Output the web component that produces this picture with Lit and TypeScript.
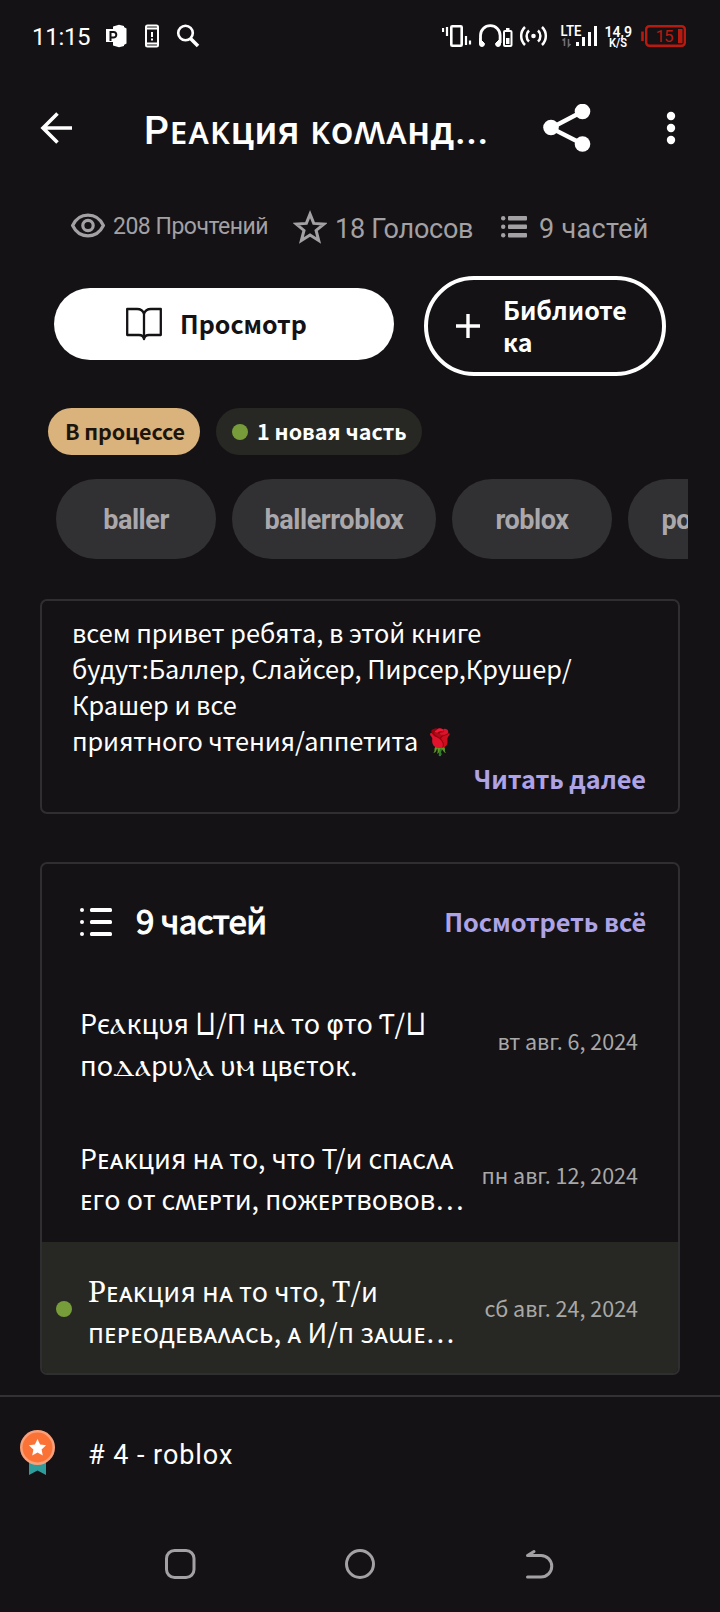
import { LitElement, html, css } from "lit";
import { customElement } from "lit/decorators.js";

interface Part {
  lines: unknown[];
  date: string;
  kind: string;
  fresh?: boolean;
}

const cop = (t: string) => html`<span class="cop">${t}</span>`;
const box = (t: string) => html`<span class="boxy">${t}</span>`;
const slab = (t: string) => html`<span class="slab">${t}</span>`;

const parts: Part[] = [
  {
    kind: "first",
    lines: [
      html`Рє${cop("ⲁ")}кцυя ${box("⊔")}/П н${cop("ⲁ")} ᴛо <span class="phi">φ</span>ᴛо Ƭ/${box("⊔")}`,
      html`по${cop("ⲇⲁ")}рυ${cop("ⲗⲁ")} υ${cop("ⲙ")} цвєᴛок.`,
    ],
    date: "вт авг. 6, 2024",
  },
  {
    kind: "second",
    lines: ["Рᴇᴀᴋция нᴀ ᴛо, чᴛо Т/и сᴨᴀсᴧᴀ", "ᴇᴦо оᴛ сʍᴇᴩᴛи, ᴨожᴇᴩᴛʙоʙоʙ…"],
    date: "пн авг. 12, 2024",
  },
  {
    kind: "third",
    fresh: true,
    lines: [
      html`${slab("Р")}ᴇᴀᴋция нᴀ ᴛо чᴛо, ${slab("Т")}/и`,
      "ᴨᴇᴩᴇодᴇʙᴀᴧᴀсь, ᴀ И/ᴨ зᴀɯᴇ…",
    ],
    date: "сб авг. 24, 2024",
  },
];

@customElement("app-root")
export class AppRoot extends LitElement {
  static styles = css`
    :host {
      display: flex;
      flex-direction: column;
      width: 720px;
      height: 1612px;
      overflow: hidden;
      background: #141215;
      color: #fff;
      font-family: "Noto Sans CJK SC", "Noto Sans", sans-serif;
      font-size: 25.3px;
    }
    * { box-sizing: border-box; }
    svg { display: block; flex: none; }
    .status { height: 72px; display: flex; align-items: center; padding: 0 33px 0 32px; font-family: Roboto, sans-serif; }
    .time { font-size: 24px; line-height: 28px; width: 74px; letter-spacing: -0.3px; padding-top: 2px; }
    .grow { flex: 1; }
    .bar { height: 112px; display: flex; align-items: center; padding: 0 41px 0 40px; }
    .bar h1 { margin: 5px 0 0 72px; width: 399px; font: 500 39px/48px Roboto, "Noto Sans", sans-serif; letter-spacing: 0.5px; white-space: nowrap; }
    .stats { height: 86px; margin-bottom: 6px; display: flex; align-items: center; padding-left: 71px; color: #a3a1a4; font: 27px/32px Roboto, sans-serif; white-space: nowrap; }
    .stats .reads { font-size: 23px; letter-spacing: -0.5px; width: 188px; padding-left: 8px; }
    .stats .votes { width: 174px; padding: 3px 0 0 8px; letter-spacing: -0.25px; }
    .stats .count { padding: 3px 0 0 12px; letter-spacing: 0.3px; }
    .actions { height: 100px; display: flex; align-items: center; padding-left: 54px; gap: 30px; font-weight: 700; font-size: 25px; }
    .read { width: 340px; height: 72px; margin-top: -4px; border-radius: 36px; background: #fff; color: #141215; display: flex; align-items: center; gap: 18px; padding-left: 72px; line-height: 36px; }
    .read span, .lib span { margin-top: -2px; }
    .lib { width: 242px; height: 100px; border: 4px solid #fff; border-radius: 50px; display: flex; align-items: center; gap: 23px; padding-left: 28px; line-height: 32px; }
    .badges { margin-top: 32px; height: 47px; display: flex; gap: 16px; padding-left: 48px; font-weight: 700; font-size: 21.5px; line-height: 45px; white-space: nowrap; }
    .state { width: 152px; border-radius: 24px; background: #d9b27c; color: #1c150c; padding-left: 17px; letter-spacing: -0.15px; }
    .fresh { width: 206px; border-radius: 24px; background: #272823; display: flex; gap: 9px; padding-left: 16px; }
    .fresh .dot { margin-top: 16px; }
    .dot { width: 16px; height: 16px; border-radius: 50%; background: #779d3a; flex: none; }
    .tags { margin: 24px 32px 0 56px; height: 80px; display: flex; gap: 16px; overflow: hidden; color: #aaa8ab; font: 700 27px/80px Roboto, sans-serif; letter-spacing: -0.45px; }
    .tag { flex: none; width: 160px; height: 80px; border-radius: 40px; background: #313033; text-align: center; padding-top: 1px; }
    .tag.wide { width: 204px; }
    .card { margin: 40px 40px 0; border: 2px solid #2f2e31; border-radius: 7px; overflow: hidden; }
    .about { height: 215px; padding: 13px 30px 0; line-height: 36px; white-space: nowrap; }
    .tight { letter-spacing: -0.12px; }
    .more { color: #ada3e6; font-weight: 700; letter-spacing: -0.08px; }
    .about .more { text-align: right; line-height: 40px; padding-right: 2px; }
    .toc { margin-top: 48px; height: 513px; }
    .head { height: 115px; display: flex; align-items: center; padding: 0 32px 0 38px; }
    .head h2 { margin: -3px auto 0 24px; font-size: 33px; font-weight: 400; line-height: 40px; letter-spacing: -0.6px; -webkit-text-stroke: 1.1px #fff; }
    .head .more { margin-top: -2px; }
    .part { display: flex; align-items: center; padding: 0 40px 0 38px; }
    .name { flex: 1; white-space: nowrap; }
    .date { font-size: 21.5px; color: #a9a8a8; line-height: 32px; white-space: nowrap; }
    .first { height: 121px; }
    .first .name { line-height: 42px; font-size: 27px; padding-top: 8px; }
    .first .date { padding-top: 3px; }
    .second { height: 142px; padding-top: 7px; }
    .second .name, .third .name { line-height: 40.5px; font-size: 26.8px; padding-top: 8px; }
    .second .name { letter-spacing: 0.03px; }
    .third { height: 131px; background: #272823; padding-left: 14px; }
    .third .dot { margin: 2px 16px 0 0; }
    .third .name { letter-spacing: 0.1px; }
    .cop { line-height: 0; font-size: 1.17em; }
    .boxy { display: inline-block; line-height: 20px; font-family: "DejaVu Sans", sans-serif; transform: scale(1, 1.32); transform-origin: 50% 78%; }
    .phi { line-height: 0; font-family: "DejaVu Sans", sans-serif; }
    .slab { line-height: 0; font-family: "Noto Serif", "DejaVu Serif", serif; font-size: 1.1em; }
    .rank { margin-top: 20px; border-top: 2px solid #323134; height: 120px; display: flex; align-items: center; padding: 0 20px 6px; gap: 33px; font: 27px/32px Roboto, sans-serif; letter-spacing: 0.95px; }
    .rank span { padding-top: 3px; }
    .nav { flex: 1; display: flex; align-items: center; padding: 0 0 0 164px; }
  `;

  private statusIcons() {
    return html`
      <svg width="94" height="24" viewBox="0 0 94 24" fill="none">
        <path d="M13 0.8 18 2v20l-5 1.200L7 21.500V18H0V5h7V2.500z" fill="#fff"/>
        <path d="M4.500 17V8h3a2.800 2.800 0 0 1 0 5.600H5" stroke="#141215" stroke-width="2"/>
        <path d="M17 2.500l3.500 2v15l-3.500 2z" fill="#fff"/>
        <rect x="40" y="1.500" width="12" height="21" rx="1.500" stroke="#fff" stroke-width="2"/>
        <path d="M40 4.500h12M40 19.500h12M46 8v5M46 14.500v2" stroke="#fff" stroke-width="2"/>
        <circle cx="79.500" cy="9" r="7.300" stroke="#fff" stroke-width="2.600"/>
        <path d="M84.500 14.500 92 22" stroke="#fff" stroke-width="3.600"/>
      </svg>`;
  }

  private systemIcons() {
    return html`
      <svg width="245" height="26" viewBox="443 23 245 26" fill="none" stroke="#fff">
        <rect x="452.300" y="26.300" width="10.400" height="19.500" rx="1" stroke-width="2.600"/>
        <path d="M444 28v4M448 27v9M467 36v9M471 40.500v4" stroke-width="2.200"/>
        <path d="M481.500 43v-7.500a9.800 9.800 0 0 1 19.600 0V43" stroke-width="2.800"/>
        <path d="M480.500 38.500v5.500q0 2.500 2.500 2.500t2.500-3zM501.500 38.500v5.500q0 2.500-2.500 2.500t-2.500-3z" fill="#fff" stroke-width="1"/>
        <rect x="505" y="31" width="7.500" height="15" rx="1" stroke-width="2"/>
        <path d="M507 29h3.500" stroke-width="2"/>
        <path d="M507 38h3.500v6H507z" fill="#fff" stroke="none"/>
        <circle cx="534.500" cy="36" r="2.300" fill="#fff" stroke="none"/>
        <path d="M530 30.500a7.500 7.500 0 0 0 0 11M539 30.500a7.500 7.500 0 0 1 0 11M526 27a12.500 12.500 0 0 0 0 18M543 27a12.500 12.500 0 0 1 0 18" stroke-width="2.500"/>
        <path d="M565.500 46v-7l-2 1.500M569.500 39v7l2-2" stroke="#6e6d70" stroke-width="1.600"/>
        <path d="M578.500 42v4M584.500 37v9M590.500 32v14M596.500 26v20" stroke-width="3"/>
        <g fill="#fff" stroke="none" font-family="Roboto, sans-serif" font-weight="600">
          <text x="561.500" y="36" font-size="15" textLength="21" lengthAdjust="spacingAndGlyphs">LTE</text>
          <text x="605.500" y="37" font-size="15.500" textLength="27.500" lengthAdjust="spacingAndGlyphs">14,9</text>
          <text x="610" y="47" font-size="12" textLength="18" lengthAdjust="spacingAndGlyphs">K/S</text>
        </g>
        <rect x="647.200" y="26.200" width="38.600" height="19.600" rx="3" stroke="#b81a10" stroke-width="2.400"/>
        <path d="M643.500 31.500v9.500" stroke="#b81a10" stroke-width="2.600"/>
        <rect x="679" y="29" width="4.500" height="14" fill="#b81a10" stroke="none"/>
        <text x="656.500" y="42" font-size="17" font-family="Roboto, sans-serif" textLength="18" fill="#b81a10" stroke="none">15</text>
      </svg>`;
  }

  render() {
    return html`
      <div class="status">
        <div class="time">11:15</div>${this.statusIcons()}
        <div class="grow"></div>${this.systemIcons()}
      </div>

      <div class="bar">
        <svg width="32" height="32" viewBox="0 0 32 32" fill="none" stroke="#fff" stroke-width="3.600">
          <path d="M32 16H3M17.500 1.500 3 16l14.500 14.500"/>
        </svg>
        <h1>Рᴇᴀᴋция ᴋоʍᴀнд...</h1>
        <svg width="48" height="48" viewBox="0 0 48 48" fill="#fff">
          <path d="M39.500 7.500 8 24l31.500 16" fill="none" stroke="#fff" stroke-width="4.300"/>
          <circle cx="39.500" cy="7.500" r="7.800"/><circle cx="8" cy="23.500" r="7.800"/><circle cx="39.500" cy="40" r="7.800"/>
        </svg>
        <div class="grow"></div>
        <svg width="16" height="34" viewBox="0 0 16 34" fill="#fff">
          <circle cx="8" cy="5" r="4.200"/><circle cx="8" cy="17" r="4.200"/><circle cx="8" cy="29" r="4.200"/>
        </svg>
      </div>

      <div class="stats">
        <svg width="34" height="28" viewBox="0 0 34 28" fill="none" stroke="#a3a1a4" stroke-width="3.200">
          <path d="M1.600 12.500C5 5.500 10.500 2.200 17 2.200s12 3.300 15.400 10.300C29 19.500 23.500 22.800 17 22.800S5 19.500 1.600 12.500z"/>
          <circle cx="17" cy="12.500" r="5.200"/>
        </svg>
        <span class="reads">208 Прочтений</span>
        <svg width="34" height="34" viewBox="0 0 34 34" fill="none" stroke="#a3a1a4" stroke-width="2.700">
          <path d="M17 5 20.300 13.300 29.300 13.900 22.400 19.600 24.700 28.500 17 23.600 9.300 28.500 11.600 19.600 4.700 13.900 13.700 13.300z" transform="translate(-2 -1.500) scale(1.12)"/>
        </svg>
        <span class="votes">18 Голосов</span>
        <svg width="26" height="24" viewBox="0 0 26 24" fill="#a3a1a4">
          <rect x="7" y="1" width="19" height="4.400" rx="1"/><rect x="7" y="9.500" width="19" height="4.400" rx="1"/><rect x="7" y="18" width="19" height="4.400" rx="1"/>
          <circle cx="2.200" cy="3.200" r="2.200"/><circle cx="2.200" cy="11.700" r="2.200"/><circle cx="2.200" cy="20.200" r="2.200"/>
        </svg>
        <span class="count">9 частей</span>
      </div>

      <div class="actions">
        <div class="read">
          <svg width="36" height="34" viewBox="0 0 36 34" fill="none" stroke="#141215" stroke-width="2.300" stroke-linejoin="round" stroke-linecap="round">
            <path d="M18 7c-1-3.500-3.500-5-7-5H1.200v26H13c3 0 4.500 1 5 4 .5-3 2-4 5-4h11.800V2H25c-3.500 0-6 1.500-7 5zM18 7v25"/>
          </svg>
          <span>Просмотр</span>
        </div>
        <div class="lib">
          <svg width="24" height="24" viewBox="0 0 24 24" stroke="#fff" stroke-width="3.400"><path d="M0 12h24M12 0v24"/></svg>
          <span>Библиоте<br>ка</span>
        </div>
      </div>

      <div class="badges">
        <div class="state">В процессе</div>
        <div class="fresh"><i class="dot"></i>1 новая часть</div>
      </div>

      <div class="tags">
        <div class="tag">baller</div>
        <div class="tag wide">ballerroblox</div>
        <div class="tag">roblox</div>
        <div class="tag">pockets</div>
      </div>

      <div class="card about">
        всем привет ребята, в этой книге<br>
        будут:Баллер, Слайсер, Пирсер,Крушер/<br>
        Крашер и все<br>
        <span class="tight">приятного чтения/аппетита 🌹</span>
        <div class="more">Читать далее</div>
      </div>

      <div class="card toc">
        <div class="head">
          <svg width="32" height="28" viewBox="0 0 32 28" fill="#fff">
            <rect x="10" y="0" width="22" height="4" rx="1.500"/><rect x="10" y="12" width="22" height="4" rx="1.500"/><rect x="10" y="24" width="22" height="4" rx="1.500"/>
            <circle cx="2" cy="2" r="2"/><circle cx="2" cy="14" r="2"/><circle cx="2" cy="26" r="2"/>
          </svg>
          <h2>9 частей</h2>
          <span class="more">Посмотреть всё</span>
        </div>
        ${parts.map(
          (p) => html`<div class="part ${p.kind}">
            ${p.fresh ? html`<i class="dot"></i>` : ""}
            <div class="name">${p.lines.map((l) => html`<div>${l}</div>`)}</div>
            <div class="date">${p.date}</div>
          </div>`
        )}
      </div>

      <div class="rank">
        <svg width="35" height="46" viewBox="0 0 35 46">
          <path d="M9 28h17v17l-8.500-4.500L9 45z" fill="#2f9c9c"/>
          <circle cx="17.500" cy="17.500" r="17.500" fill="#f9a07a"/>
          <circle cx="17.500" cy="17.500" r="15" fill="#fb7236"/>
          <path d="M17.500 9l2.600 5.600 6 .7-4.500 4.100 1.200 6-5.300-3-5.300 3 1.200-6-4.500-4.100 6-.7z" fill="#fff"/>
        </svg>
        <span># 4 - roblox</span>
      </div>

      <div class="nav">
        <svg width="392" height="32" viewBox="-1 0 392 32" fill="none" stroke="#a3a1a4" stroke-width="3">
          <rect x="1.500" y="2.500" width="27.500" height="27" rx="8"/>
          <circle cx="195" cy="16" r="13.500"/>
          <path d="M362.500 7.500H376a10.700 10.700 0 0 1 0 21.500h-13.500M362.500 7.500l6.500-4" stroke-linecap="round"/>
        </svg>
      </div>
    `;
  }
}
